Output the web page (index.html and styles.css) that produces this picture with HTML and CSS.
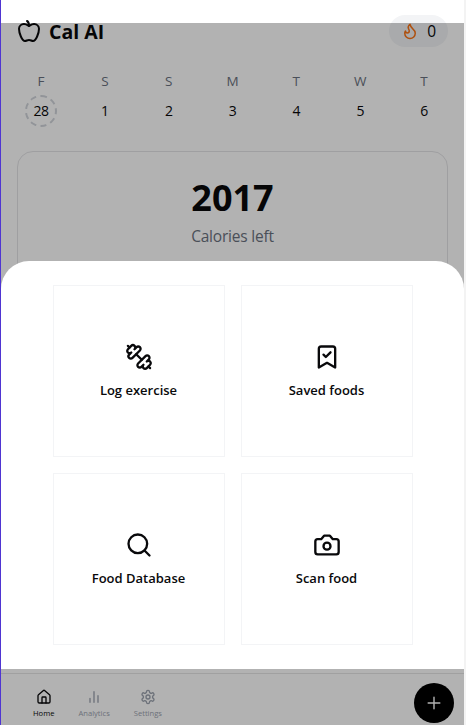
FILE: index.html
```html
<!DOCTYPE html>
<html lang="en">
<head>
<meta charset="utf-8">
<title>Cal AI</title>
<link rel="stylesheet" href="styles.css">
</head>
<body>
<div class="app">
  <header class="header">
    <div class="brand">
      <svg class="icon apple" viewBox="0 0 24 24"><path d="M12 20.94c1.5 0 2.75 1.06 4 1.06 3 0 6-8 6-12.22A4.91 4.91 0 0 0 17 5c-2.22 0-4 1.44-5 2-1-.56-2.78-2-5-2a4.9 4.9 0 0 0-5 4.78C2 14 5 22 8 22c1.25 0 2.5-1.06 4-1.06Z"/><path d="M10 2c1 .5 2 2 2 5"/></svg>
      <h1 class="title">Cal AI</h1>
    </div>
    <div class="streak">
      <svg class="icon flame" viewBox="0 0 24 24"><path d="M8.5 14.5A2.5 2.5 0 0 0 11 12c0-1.38-.5-2-1-3-1.072-2.143-.224-4.054 2-6 .5 2.5 2 4.9 4 6.5 2 1.6 3 3.5 3 5.5a7 7 0 1 1-14 0c0-1.153.433-2.294 1-3a2.5 2.5 0 0 0 2.5 2.5z"/></svg>
      <span>0</span>
    </div>
  </header>
  <div class="week">
    <div class="day"><span class="name">F</span><span class="date today">28</span></div>
    <div class="day"><span class="name">S</span><span class="date">1</span></div>
    <div class="day"><span class="name">S</span><span class="date">2</span></div>
    <div class="day"><span class="name">M</span><span class="date">3</span></div>
    <div class="day"><span class="name">T</span><span class="date">4</span></div>
    <div class="day"><span class="name">W</span><span class="date">5</span></div>
    <div class="day"><span class="name">T</span><span class="date">6</span></div>
  </div>
  <section class="card">
    <div class="calories">2017</div>
    <div class="caption">Calories left</div>
  </section>
  <nav class="nav">
    <div class="tabs">
      <div class="tab active">
        <svg class="icon" viewBox="0 0 24 24"><path d="M15 21v-8a1 1 0 0 0-1-1h-4a1 1 0 0 0-1 1v8"/><path d="M3 10a2 2 0 0 1 .709-1.528l7-5.999a2 2 0 0 1 2.582 0l7 5.999A2 2 0 0 1 21 10v9a2 2 0 0 1-2 2H5a2 2 0 0 1-2-2z"/></svg>
        <span>Home</span>
      </div>
      <div class="tab">
        <svg class="icon" viewBox="0 0 24 24"><path d="M18 20V10M12 20V4M6 20v-6"/></svg>
        <span>Analytics</span>
      </div>
      <div class="tab">
        <svg class="icon" viewBox="0 0 24 24"><path d="M12.22 2h-.44a2 2 0 0 0-2 2v.18a2 2 0 0 1-1 1.73l-.43.25a2 2 0 0 1-2 0l-.15-.08a2 2 0 0 0-2.73.73l-.22.38a2 2 0 0 0 .73 2.73l.15.1a2 2 0 0 1 1 1.72v.51a2 2 0 0 1-1 1.74l-.15.09a2 2 0 0 0-.73 2.73l.22.38a2 2 0 0 0 2.73.73l.15-.08a2 2 0 0 1 2 0l.43.25a2 2 0 0 1 1 1.73V20a2 2 0 0 0 2 2h.44a2 2 0 0 0 2-2v-.18a2 2 0 0 1 1-1.73l.43-.25a2 2 0 0 1 2 0l.15.08a2 2 0 0 0 2.73-.73l.22-.39a2 2 0 0 0-.73-2.73l-.15-.08a2 2 0 0 1-1-1.74v-.5a2 2 0 0 1 1-1.74l.15-.09a2 2 0 0 0 .73-2.73l-.22-.38a2 2 0 0 0-2.73-.73l-.15.08a2 2 0 0 1-2 0l-.43-.25a2 2 0 0 1-1-1.73V4a2 2 0 0 0-2-2z"/><circle cx="12" cy="12" r="3"/></svg>
        <span>Settings</span>
      </div>
    </div>
    <div class="add"><svg class="icon" viewBox="0 0 24 24"><path d="M5 12h14M12 5v14"/></svg></div>
  </nav>
  <div class="overlay"></div>
  <div class="sheet">
    <div class="action">
      <svg class="icon" viewBox="0 0 24 24"><path d="M14.4 14.4 9.6 9.6"/><path d="M18.657 21.485a2 2 0 1 1-2.829-2.828l-1.767 1.768a2 2 0 1 1-2.829-2.829l6.364-6.364a2 2 0 1 1 2.829 2.829l-1.768 1.767a2 2 0 1 1 2.828 2.829z"/><path d="m21.5 21.5-1.4-1.4M3.9 3.9 2.5 2.5"/><path d="M6.404 12.768a2 2 0 1 1-2.829-2.829l1.768-1.767a2 2 0 1 1-2.828-2.829l2.828-2.828a2 2 0 1 1 2.829 2.828l1.767-1.768a2 2 0 1 1 2.829 2.829z"/></svg>
      <span>Log exercise</span>
    </div>
    <div class="action">
      <svg class="icon" viewBox="0 0 24 24"><path d="m19 21-7-4-7 4V5a2 2 0 0 1 2-2h10a2 2 0 0 1 2 2Z"/><path d="m9 10 2 2 4-4"/></svg>
      <span>Saved foods</span>
    </div>
    <div class="action">
      <svg class="icon" viewBox="0 0 24 24"><circle cx="11" cy="11" r="8"/><path d="m21 21-4.3-4.3"/></svg>
      <span>Food Database</span>
    </div>
    <div class="action">
      <svg class="icon" viewBox="0 0 24 24"><path d="M14.5 4h-5L7 7H4a2 2 0 0 0-2 2v9a2 2 0 0 0 2 2h16a2 2 0 0 0 2-2V9a2 2 0 0 0-2-2h-3l-2.5-3z"/><circle cx="12" cy="13" r="3"/></svg>
      <span>Scan food</span>
    </div>
  </div>
</div>
</body>
</html>
```
FILE: styles.css
```css
* { box-sizing: border-box; }
body {
  margin: 0;
  height: 725px;
  overflow: hidden;
  background: #f3f3f3;
  font-family: "Open Sans", "Noto Sans", sans-serif;
  color: #09090b;
}
.app {
  position: relative;
  display: flex;
  flex-direction: column;
  width: 464px;
  height: 725px;
  padding: 15px 16px 0;
  border-left: 1px solid #4f35d2;
  background: #fff;
}
.icon {
  display: block;
  flex: none;
  fill: none;
  stroke: currentColor;
  stroke-width: 2;
  stroke-linecap: round;
  stroke-linejoin: round;
}
.header { display: flex; justify-content: space-between; align-items: center; height: 32px; }
.brand { display: flex; align-items: center; gap: 8px; }
.apple { width: 24px; height: 24px; }
.title { margin: 0; padding-top: 2px; font-size: 19.5px; line-height: 28px; font-weight: 700; }
.streak {
  display: flex;
  align-items: center;
  gap: 8px;
  height: 32px;
  padding: 0 12px;
  border-radius: 16px;
  background: #f3f4f6;
  font-size: 15.5px;
}
.flame { width: 18px; height: 18px; color: #f97316; }
.week { display: flex; justify-content: space-between; margin-top: 24px; }
.day { display: flex; flex-direction: column; align-items: center; gap: 4px; width: 48px; font-size: 13.5px; line-height: 20px; }
.name { color: #6b7280; }
.date { display: flex; align-items: center; justify-content: center; width: 32px; height: 32px; font-size: 14px; letter-spacing: -0.5px; }
.today { border: 2px dashed #d1d5db; border-radius: 50%; }
.card {
  flex: none;
  height: 130px;
  margin-top: 24px;
  padding-top: 24px;
  border: 1px solid #e4e4e7;
  border-radius: 16px;
  text-align: center;
}
.calories { font-size: 36px; line-height: 44px; font-weight: 700; }
.caption { margin-top: 4px; font-size: 15.5px; line-height: 24px; letter-spacing: -0.2px; color: #6b7280; }
.nav {
  display: flex;
  justify-content: space-between;
  height: 52px;
  margin: auto -16px 0;
  padding: 0 10px 0 32px;
  border-top: 1px solid #e5e5e5;
}
.tabs { display: flex; gap: 24px; padding-top: 15px; }
.tab { display: flex; flex-direction: column; align-items: center; gap: 3px; color: #9ca3af; font-size: 7.6px; line-height: 10px; }
.tab .icon { width: 16px; height: 16px; }
.active { color: #09090b; }
.add {
  display: flex;
  align-items: center;
  justify-content: center;
  width: 40px;
  height: 40px;
  margin-top: 9px;
  border-radius: 50%;
  background: #000;
  color: #fff;
}
.add .icon { width: 20px; height: 20px; stroke-width: 1.7; }
.overlay { position: absolute; inset: 23px 0 0; background: rgba(0, 0, 0, 0.3); }
.sheet {
  position: absolute;
  inset: 261px 0 56px;
  display: grid;
  grid-template-columns: 172px 172px;
  grid-template-rows: 172px 172px;
  gap: 16px;
  justify-content: center;
  padding: 24px 0;
  border-radius: 28px 28px 0 0;
  background: #fff;
}
.action {
  display: flex;
  flex-direction: column;
  align-items: center;
  justify-content: center;
  gap: 9px;
  border: 1px solid #f3f4f6;
  font-size: 13px;
  line-height: 20px;
  font-weight: 600;
}
.action .icon { width: 28px; height: 28px; }
```
